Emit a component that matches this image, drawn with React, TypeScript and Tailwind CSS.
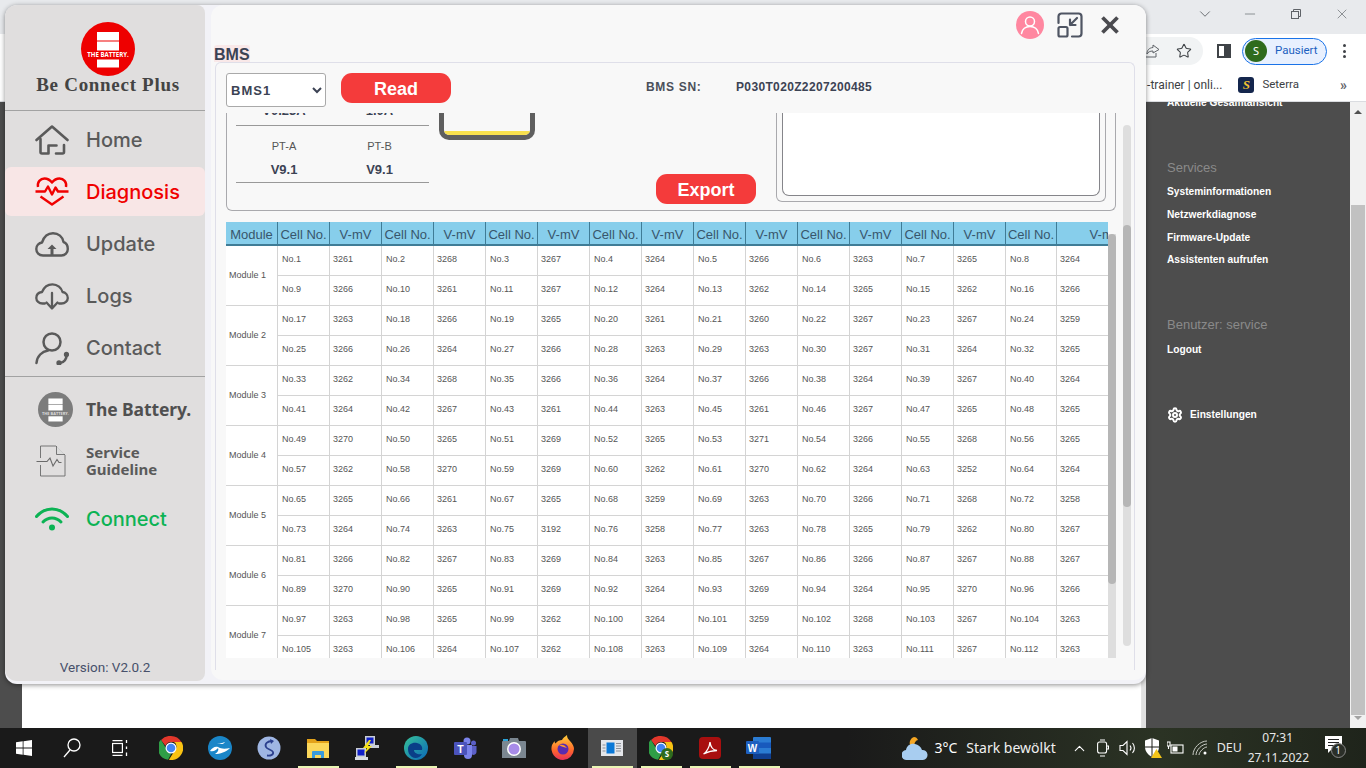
import React from "react";
import { X, Star, Settings, ChevronUp, Minus, ChevronDown } from "lucide-react";

const data: number[][][] = [
  [[3261,3268,3267,3264,3266,3263,3265,3264],[3266,3261,3267,3264,3262,3265,3262,3266]],
  [[3263,3266,3265,3261,3260,3267,3267,3259],[3266,3264,3266,3263,3263,3267,3264,3265]],
  [[3262,3268,3266,3264,3266,3264,3267,3264],[3264,3267,3261,3263,3261,3267,3265,3265]],
  [[3270,3265,3269,3265,3271,3266,3268,3265],[3262,3270,3269,3262,3270,3264,3252,3264]],
  [[3265,3261,3265,3259,3263,3266,3268,3258],[3264,3263,3192,3258,3263,3265,3262,3267]],
  [[3266,3267,3269,3263,3267,3266,3267,3267],[3270,3265,3269,3264,3269,3264,3270,3266]],
  [[3263,3265,3262,3264,3259,3268,3267,3263],[3263,3264,3262,3263,3264,3263,3267,3263]],
];

function BatteryLogo({ size, bg, band }: { size: number; bg: string; band: string }) {
  return (
    <svg width={size} height={size} viewBox="0 0 54 54">
      <circle cx="27" cy="27" r="27" fill={bg} />
      <rect x="16" y="10" width="22" height="8.5" fill="#fff" />
      <rect x="16" y="19.5" width="22" height="9" fill="#fff" />
      <rect x="16" y="37.5" width="22" height="8" fill="#fff" />
      <text x="27" y="35" textAnchor="middle" fontSize="6.1" fontWeight="700" fill={band} fontFamily="'Open Sans',sans-serif">THE BATTERY.</text>
    </svg>
  );
}

const HomeIcon = () => (
  <svg width="34" height="30" viewBox="0 0 34 30" fill="none" stroke="#5a5a5a" strokeWidth="2.6" strokeLinejoin="round" strokeLinecap="round">
    <path d="M1.500 15 17 1.500 32.500 15" />
    <path d="M5.500 14v13a1.500 1.500 0 0 0 1.500 1.500h6.500V20.500h8" />
    <path d="M21 28.500h6.500a1.500 1.500 0 0 0 1.500-1.500V20" />
  </svg>
);
const HeartIcon = () => (
  <svg width="34" height="29" viewBox="0 0 34 29" fill="none" stroke="#f00000" strokeWidth="2.4" strokeLinejoin="round">
    <path d="M3 10C2 5 5.500 1.500 9.500 1.500 12.500 1.500 15 3 17 5.500 19 3 21.500 1.500 24.500 1.500 28.500 1.500 32 5 31 10" />
    <path d="M0.500 14.500H10L13 9.500 17 17.500 20.500 10.500 23 14.500H33.500" />
    <path d="M5.500 19.500 17 27.500 28.500 19.500" />
  </svg>
);
const CloudUp = () => (
  <svg width="34" height="25" viewBox="0 0 34 25" fill="none" stroke="#5a5a5a" strokeWidth="2.4" strokeLinejoin="round">
    <path d="M8 23.500C4 23.500 1.300 20.800 1.300 17 1.300 13.500 4 11 7 10.500 9 4.500 13 1.300 18 1.300 23.500 1.300 27.500 5 28.500 10 31.500 11 32.800 14 32.800 17 32.800 20.800 30 23.500 26.500 23.500Z" />
    <path d="M17 12.500 12.500 17H15.500V23H18.500V17H21.500Z" fill="#5a5a5a" stroke="none" />
  </svg>
);
const CloudDown = () => (
  <svg width="34" height="27" viewBox="0 0 34 27" fill="none" stroke="#5a5a5a" strokeWidth="2.3" strokeLinejoin="round" strokeLinecap="round">
    <path d="M10 20.500H7.500C4 20.500 1.300 18 1.300 15 1.300 12 3.500 9.500 7 9 9 4 13 1.300 17.500 1.300 22.500 1.300 26.500 5 27.500 9 30.500 9.500 32.800 12 32.800 15 32.800 18 30 20.500 26.500 20.500H24" />
    <path d="M17 10V25M11.500 19.500 17 25.500 22.500 19.500" />
  </svg>
);
const ContactIcon = () => (
  <svg width="34" height="33" viewBox="0 0 34 33" fill="none" stroke="#5a5a5a" strokeWidth="2.5" strokeLinecap="round">
    <circle cx="17" cy="10" r="8.500" />
    <path d="M1.500 31C2 24 7 19.500 13 18.500" />
    <path d="M31.500 22C32 27 29 30.500 25 31" />
    <circle cx="24" cy="31" r="1.400" fill="#5a5a5a" />
    <circle cx="31.500" cy="22.500" r="1.400" fill="#5a5a5a" />
  </svg>
);
const DocIcon = () => (
  <svg width="32" height="32" viewBox="0 0 32 32" fill="none" stroke="#6a6a6a" strokeWidth="0.9">
    <path d="M4.500 13V1H20L29 10V31H4.500V20" />
    <path d="M20.500 1V9.500H29" fill="#dcdcdc" />
    <path d="M0.500 16.500H11L14 13 17 21 21 14.500 23 17.500H25.500" strokeWidth="1.100" />
  </svg>
);
const WifiIcon = () => (
  <svg width="34" height="24" viewBox="0 0 34 24" fill="none" stroke="#0cb354" strokeWidth="3" strokeLinecap="round">
    <path d="M1.500 9.500C10 -0.500 24 -0.500 32.500 9.500" />
    <path d="M8 15C13 9.500 21 9.500 26 15" />
    <circle cx="17" cy="20.500" r="3" fill="#0cb354" stroke="none" />
  </svg>
);

function NavRow({ icon, label, cls = "text-[#5a5a5a]", rowCls = "" }: { icon: React.ReactNode; label: string; cls?: string; rowCls?: string }) {
  return (
    <div className={`flex items-center h-[52px] ${rowCls}`}>
      <div className="w-[81px] flex justify-center pl-[13px] shrink-0">{icon}</div>
      <span className={`font-['Inter',sans-serif] font-medium text-[20px] ${cls}`}>{label}</span>
    </div>
  );
}

function Sidebar() {
  return (
    <aside className="w-[200px] h-[676px] shrink-0 bg-[#e0dede] rounded-l-[12px] rounded-r-[8px] flex flex-col">
      <div className="h-[106px] flex flex-col items-center border-b border-[#a2a2a2] pt-[17px]">
        <div className="pl-[6px] flex flex-col items-center">
          <BatteryLogo size={54} bg="#ee0000" band="#ffffff" />
          <div className="font-['Liberation_Serif',serif] font-bold text-[19px] tracking-[0.7px] text-[#444444] leading-[20px] -mt-[1px] whitespace-nowrap">Be Connect Plus</div>
        </div>
      </div>
      <div className="pt-[3px] h-[266px] border-b border-[#a2a2a2] flex flex-col">
        <NavRow icon={<HomeIcon />} label="Home" />
        <div className="mt-[1px] h-[49px] bg-[#f8e6e6] rounded-[6px] flex items-center">
          <div className="w-[81px] flex justify-center pl-[13px] shrink-0"><HeartIcon /></div>
          <span className="font-['Inter',sans-serif] font-medium text-[20px] text-[#f00000]">Diagnosis</span>
        </div>
        <div className="h-[2px]" />
        <NavRow icon={<CloudUp />} label="Update" />
        <NavRow icon={<CloudDown />} label="Logs" />
        <NavRow icon={<ContactIcon />} label="Contact" />
      </div>
      <div className="flex items-center h-[36px] mt-[14px]">
        <div className="w-[81px] flex justify-center pl-[19px] shrink-0"><BatteryLogo size={35} bg="#7c7c7c" band="#dddddd" /></div>
        <span className="font-['Noto_Sans',sans-serif] font-bold text-[17.500px] text-[#505050] tracking-[-0.1px]">The Battery.</span>
      </div>
      <div className="flex items-center h-[36px] mt-[16px]">
        <div className="w-[81px] flex justify-center pl-[13px] shrink-0"><DocIcon /></div>
        <span className="font-['Noto_Sans',sans-serif] font-bold text-[15px] leading-[17px] text-[#5a5a5a]">Service<br />Guideline</span>
      </div>
      <NavRow icon={<WifiIcon />} label="Connect" cls="text-[#0cb354]" rowCls="mt-[14px]" />
      <div className="mt-auto pb-[5px] text-center font-['Roboto',sans-serif] text-[13.500px] leading-[18px] text-[#47506a]">Version: V2.0.2</div>
    </aside>
  );
}

function Table() {
  const head: string[] = [];
  for (let i = 0; i < 8; i++) head.push("Cell No.", "V-mV");
  return (
    <div className="w-[882px] h-[436px] overflow-hidden mt-[11px] bg-white">
      <table className="table-fixed border-separate border-spacing-0 w-[929px] font-['Liberation_Sans',sans-serif]">
        <colgroup>
          <col className="w-[52px]" />
          {head.map((_, i) => <col key={i} className={i === 15 ? "w-[98px]" : i === 14 ? "w-[51px]" : "w-[52px]"} />)}
        </colgroup>
        <thead>
          <tr>
            {["Module", ...head].map((h, i) => (
              <th key={i} className="h-[24px] bg-[#87ceeb] border-r-[1.500px] border-b-2 border-[#3f7c96] text-[13px] leading-[16px] font-normal text-[#38566b] text-center whitespace-nowrap overflow-hidden p-0 pt-[3px]">{h}</th>
            ))}
          </tr>
        </thead>
        <tbody>
          {data.map((mod, m) =>
            mod.map((row, r) => {
              const base = m * 16 + r * 8;
              return (
                <tr key={`${m}-${r}`}>
                  {r === 0 && (
                    <td rowSpan={2} className="border-r border-b border-[#d4d4d4] text-[9px] text-[#555555] pl-[3px] align-middle">Module {m + 1}</td>
                  )}
                  {row.map((v, c) => (
                    <React.Fragment key={c}>
                      <td className="h-[30px] border-r border-b border-[#d4d4d4] text-[9px] text-[#555555] pl-[4px] pb-[1px] align-middle">No.{base + c + 1}</td>
                      <td className="h-[30px] border-r border-b border-[#d4d4d4] text-[9px] text-[#555555] pl-[3px] pb-[1px] align-middle">{v}</td>
                    </React.Fragment>
                  ))}
                </tr>
              );
            })
          )}
        </tbody>
      </table>
    </div>
  );
}

function MainPanel() {
  return (
    <main className="ml-[6px] w-[935px] h-[675px] bg-[#f8f8f8] rounded-[12px] flex flex-col">
      <div className="h-[40px] flex items-center justify-end pr-[21px]">
        <div className="w-[28px] h-[28px] rounded-full bg-[#ff87a0] flex items-center justify-center">
          <svg width="20" height="20" viewBox="0 0 20 20" fill="none" stroke="#fff" strokeWidth="1.500" strokeLinecap="round">
            <circle cx="10" cy="6.500" r="4.500" />
            <path d="M1.500 18.500C2.500 13.500 6 11.500 10 11.500 14 11.500 17.500 13.500 18.500 18.500" />
          </svg>
        </div>
        <svg className="ml-[13px]" width="26" height="26" viewBox="0 0 26 26" fill="none" stroke="#4f5563" strokeWidth="2.200" strokeLinecap="round" strokeLinejoin="round">
          <path d="M1.500 11V4.500a3 3 0 0 1 3-3H21.500a3 3 0 0 1 3 3V21.500a3 3 0 0 1-3 3H15" />
          <rect x="1.500" y="15" width="9" height="9.500" rx="1.500" />
          <path d="M20 6 13 13M13 7.500V13H18.500" />
        </svg>
        <X className="ml-[12px] text-[#4a4a4f]" size={30} strokeWidth={3} strokeLinecap="butt" />
      </div>
      <div className="h-[17px] pl-[3px]">
        <span className="block w-[36px] h-[17px] bg-[#f9e8e8] rounded-t-[3px] text-[16px] leading-[20px] font-bold text-[#3c4354]">BMS</span>
      </div>
      <section className="relative ml-[4px] w-[920px] h-[608px] border-x border-t border-[#dfdfe9] rounded-t-[6px]">
        <div className="h-[50px] pl-[10px] pt-[10px] flex items-start">
          <select defaultValue="BMS1" className="w-[100px] h-[34px] bg-white border border-[#a9a9a9] rounded-[3px] text-[13px] font-bold tracking-[1px] text-[#3c4354] pl-0 outline-none">
            <option>BMS1</option>
            <option>BMS2</option>
          </select>
          <button className="ml-[15px] w-[110px] h-[30px] bg-[#f43b3b] rounded-[11px] text-white font-bold text-[18px] leading-[32px]">Read</button>
          <div className="ml-[195px] mt-[5px] text-[12px] font-bold text-[#4a4f5a] tracking-[0.7px] w-[90px] whitespace-nowrap">BMS SN:</div>
          <div className="text-[12px] mt-[5px] font-bold text-[#3c4354] tracking-[0.35px]">P030T020Z2207200485</div>
        </div>
        <div className="h-[545px] overflow-hidden px-[10px]">
          <div className="w-[890px] h-[98px] border-x border-b border-[#a9a9ad] rounded-b-[6px] flex">
            <div className="ml-[9px] w-[193px] shrink-0">
              <div className="h-[13px] overflow-hidden border-b border-[#999999] flex text-[13px] font-bold text-[#3c4354]">
                <span className="w-[96px] text-center -mt-[11px] leading-[18px]">V0.23A</span>
                <span className="w-[95px] text-center -mt-[11px] leading-[18px]">1.0A</span>
              </div>
              <div className="h-[57px] border-b border-[#999999] flex">
                <div className="w-[96px] text-center">
                  <div className="text-[11px] text-[#555555] pt-[14px] leading-[13px]">PT-A</div>
                  <div className="text-[13px] font-bold text-[#3c4354] mt-[9px] leading-[16px]">V9.1</div>
                </div>
                <div className="w-[95px] text-center">
                  <div className="text-[11px] text-[#555555] pt-[14px] leading-[13px]">PT-B</div>
                  <div className="text-[13px] font-bold text-[#3c4354] mt-[9px] leading-[16px]">V9.1</div>
                </div>
              </div>
            </div>
            <div className="ml-[10px] w-[96px] h-[27px] shrink-0 border-x-[5px] border-b-[5px] border-[#5f5f5f] rounded-b-[10px] flex flex-col justify-end overflow-hidden">
              <div className="h-[4px] bg-[#f8e04e]" />
            </div>
            <button className="ml-[121px] mt-[61px] w-[100px] h-[30px] shrink-0 bg-[#f43b3b] rounded-[11px] text-white font-bold text-[18px] leading-[32px]">Export</button>
            <div className="ml-[20px] w-[330px] h-[89px] shrink-0 border-x border-b border-[#a9a9ad] rounded-b-[6px]">
              <div className="mx-[5px] h-[83px] bg-white border-x border-b border-[#85858a] rounded-b-[7px]" />
            </div>
          </div>
          <Table />
        </div>
        <div className="absolute left-[892px] top-[171px] w-[8px] h-[424px] bg-[#dedede]">
          <div className="w-[8px] h-[350px] bg-[#b6b6b6] rounded-full" />
        </div>
        <div className="absolute left-[907px] top-[62px] w-[8px] h-[521px] bg-[#dedede] rounded-full">
          <div className="mt-[100px] w-[8px] h-[282px] bg-[#b6b6b6] rounded-full" />
        </div>
      </section>
    </main>
  );
}

const ChromeIcon = ({ badge }: { badge?: boolean }) => (
  <svg width="24" height="24" viewBox="0 0 24 24">
    <path d="M12 0a12 12 0 0 1 10.400 6H12a6 6 0 0 0-5.600 3.800L2 3.900A12 12 0 0 1 12 0Z" fill="#e2372b" />
    <path d="M1.900 3.700 7.200 12.500a5.500 5.500 0 0 0 5.200 5l-3.300 6.200A12 12 0 0 1 1.900 3.700Z" fill="#2f9e46" />
    <path d="M22.500 6a12 12 0 0 1-12.600 17.800L15.500 15a5.500 5.500 0 0 0-.5-8.900Z" fill="#f9c213" />
    <circle cx="12" cy="12" r="5.500" fill="#fff" />
    <circle cx="12" cy="12" r="4.300" fill="#4285f4" />
    {badge && <circle cx="18" cy="18" r="6" fill="#2f6b1d" />}
    {badge && <text x="18" y="21" fontSize="8" textAnchor="middle" fill="#fff" fontWeight="700" fontFamily="'Noto Sans',sans-serif">S</text>}
  </svg>
);

const taskIcons: React.ReactNode[] = [
  <ChromeIcon key="c" />,
  <svg key="b" width="24" height="24" viewBox="0 0 24 24"><circle cx="12" cy="12" r="12" fill="#1a86c8" /><path d="M2 15c4 1 6-1 8-3 1 2 0 4-3 6 5 0 11-2 15-6-5 1-9 1-12-1-3-1-6 1-8 4Z" fill="#fff" /><path d="M9 7c3 1 5 0 8-1-1 2-4 3-8 1Z" fill="#fff" /></svg>,
  <svg key="s" width="24" height="24" viewBox="0 0 24 24" fill="none"><circle cx="12" cy="12" r="11.500" fill="#9fb6e3" /><path d="M15.500 5C10 5 7.500 8 9 11c1 2.500 6 2.500 7 5 .8 2.500-2 4-6 3.500" stroke="#2b3f8e" strokeWidth="1.800" /><path d="M13 3l4 2-3 3Z" fill="#2b3f8e" /></svg>,
  <svg key="f" width="22" height="22" viewBox="0 0 22 22"><path d="M0 2h8l2 2h12v3H0Z" fill="#e3a21a" /><path d="M0 6h22v15H0Z" fill="#fbd75b" /><path d="M5 21v-6a1 1 0 0 1 1-1h10a1 1 0 0 1 1 1v6h-3v-3H8v3Z" fill="#3a9bdc" /></svg>,
  <svg key="n" width="24" height="26" viewBox="0 0 24 26"><rect x="10" y="1" width="10" height="9" fill="#c9ced6" /><rect x="11.500" y="2.500" width="7" height="6" fill="#1020c8" /><rect x="15" y="10" width="9" height="3" fill="#c9ced6" /><rect x="1" y="13" width="10" height="9" fill="#c9ced6" /><rect x="2.500" y="14.500" width="7" height="6" fill="#1020c8" /><rect x="0" y="22" width="13" height="3" fill="#d8dce2" /><path d="M14 5 8 13h4l-3 6 8-8h-4l3-6Z" fill="#f5e11a" /></svg>,
  <svg key="e" width="24" height="24" viewBox="0 0 24 24"><defs><linearGradient id="edg" x1="0" y1="0" x2="1" y2="1"><stop offset="0" stopColor="#37c39a" /><stop offset="1" stopColor="#0b67b8" /></linearGradient></defs><circle cx="12" cy="12" r="12" fill="url(#edg)" /><path d="M4 13c0-5 5-7 9-6 4 1 6 4 5 7h-8c0 3 4 5 8 4-2 4-7 5-10 3-3-2-4-5-4-8Z" fill="#0a3f88" /></svg>,
  <svg key="t" width="24" height="24" viewBox="0 0 24 24"><circle cx="14" cy="5" r="3.500" fill="#7b83eb" /><circle cx="20.500" cy="7" r="2.500" fill="#5b5fc7" /><path d="M11 9h8v10a4 4 0 0 1-8 0Z" fill="#7b83eb" /><path d="M19 10h4.500v6a3 3 0 0 1-4.500 2.500Z" fill="#5b5fc7" /><rect x="1" y="6" width="13" height="13" rx="1" fill="#4b53bc" /><text x="7.500" y="16.500" fontSize="10.500" fontWeight="700" fill="#fff" textAnchor="middle" fontFamily="'Liberation Sans',sans-serif">T</text></svg>,
  <svg key="ca" width="24" height="22" viewBox="0 0 24 22"><path d="M0 5a1 1 0 0 1 1-1h6l1-3h8l1 3h6a1 1 0 0 1 1 1v16H0Z" fill="#7b8791" /><rect x="1" y="2" width="5" height="2" fill="#2aa3d8" /><circle cx="12" cy="12" r="7" fill="#fff" /><circle cx="12" cy="12" r="5.500" fill="#a78be8" /></svg>,
  <svg key="ff" width="24" height="26" viewBox="0 0 24 26"><defs><linearGradient id="fox" x1="0" y1="0" x2="0" y2="1"><stop offset="0" stopColor="#ffcf3a" /><stop offset="0.6" stopColor="#ff6a2b" /><stop offset="1" stopColor="#e8305a" /></linearGradient></defs><path d="M12 25A11.500 11.500 0 0 1 1 10c1-2 2-3 2.500-4 0 1 .5 2 1 2.500C6 6 9 5 11 5c1-2 3-3.500 5-5 0 2.500 1 4 3 6 3 3 4 6 4 8A11.500 11.500 0 0 1 12 25Z" fill="url(#fox)" /><circle cx="12" cy="14" r="5.500" fill="#5a2bb0" /><path d="M8 10c3-1 6 0 8 3-2-1-5-1-8-3Z" fill="#ff9a2b" /></svg>,
  <svg key="nw" width="22" height="16" viewBox="0 0 22 16"><rect width="22" height="16" fill="#e4e6ea" /><rect x="5.500" y="2.500" width="8" height="11" fill="#0a78d7" /><path d="M15 3.500h5M15 6h5M15 8.500h5M15 11h5M1.500 5h3M1.500 8h3M1.500 11h3" stroke="#8a8f98" /></svg>,
  <ChromeIcon key="cb" badge />,
  <svg key="a" width="22" height="22" viewBox="0 0 22 22"><rect width="22" height="22" rx="4" fill="#a80f0f" /><path d="M4.500 17c3-1.500 6-7 6.500-12 .5 5 3 8 7 8.500-4 0-8.500 1-13.500 3.500Z" fill="none" stroke="#fff" strokeWidth="1.300" /></svg>,
  <svg key="w" width="26" height="22" viewBox="0 0 26 22"><rect x="7" y="0" width="18" height="22" rx="1" fill="#2b7cd3" /><rect x="7" y="5.500" width="18" height="5.500" fill="#185abd" /><rect x="7" y="16.500" width="18" height="5.500" fill="#103f91" /><rect x="0" y="4" width="13" height="13" rx="1" fill="#1e5fbf" /><text x="6.500" y="14.500" fontSize="10" fontWeight="700" fill="#fff" textAnchor="middle" fontFamily="'Liberation Sans',sans-serif">W</text></svg>,
];
const underlined = [3, 5, 9, 10, 11, 12];

function Taskbar() {
  return (
    <footer className="h-[40px] shrink-0 flex items-center bg-[linear-gradient(90deg,#1a1a1a_0%,#1a1a1a_62%,#2b3324_85%,#1f241b_100%)] text-white font-['Noto_Sans',sans-serif]">
      <div className="w-[48px] flex justify-center">
        <svg width="16" height="16" viewBox="0 0 16 16" fill="#fff"><path d="M0 2.300 6.700 1.300V7.600H0ZM7.500 1.200 16 0V7.600H7.500ZM0 8.400H6.700V14.700L0 13.700ZM7.500 8.400H16V16L7.500 14.800Z" /></svg>
      </div>
      <div className="w-[48px] flex justify-center">
        <svg width="18" height="20" viewBox="0 0 18 20" fill="none" stroke="#fff" strokeWidth="1.300"><circle cx="11" cy="7" r="6" /><path d="M7 12 1 19" /></svg>
      </div>
      <div className="w-[48px] flex justify-center">
        <svg width="16" height="16" viewBox="0 0 16 16" fill="none" stroke="#fff" strokeWidth="1.200"><rect x="0.600" y="3.500" width="9.800" height="9" /><path d="M0.500 0.600H10.500M0.500 15.400H10.500M14.500 0V3M14.500 6.500V9M14.500 12.500V16" strokeWidth="1.300" /></svg>
      </div>
      <div className="w-[2.500px]" />
      {taskIcons.map((ic, i) => (
        <div key={i} className={`relative w-[49px] h-[40px] flex items-center justify-center ${i === 9 ? "bg-[#4a4a4a]" : ""}`}>
          {ic}
          {underlined.includes(i) && <div className="absolute bottom-0 left-[4px] right-[4px] h-[2px] bg-[#e9f5b4]" />}
        </div>
      ))}
      <div className="ml-[118px] flex items-center">
        <svg width="30" height="26" viewBox="0 0 30 26"><path d="M12 2c-3 1-5 4-4 8l4 2c0-4 2-7 4-7-1-2-2-3-4-3Z" fill="#f5a623" /><path d="M5 25a5 5 0 0 1-1-10c1-5 5-7 9-6 3 .5 6 3 7 6a5 5 0 0 1 1 10Z" fill="#a8cdf0" /></svg>
        <span className="ml-[3px] text-[14px] leading-[16px]">3°C</span>
        <span className="ml-[9px] text-[14px] leading-[16px] text-[#f0f0f0] whitespace-nowrap">Stark bewölkt</span>
      </div>
      <ChevronUp className="ml-[15px]" size={17} strokeWidth={1.500} />
      <svg className="ml-[9px]" width="12" height="18" viewBox="0 0 12 18" fill="none" stroke="#fff" strokeWidth="1.100"><rect x="0.600" y="3" width="9" height="11" rx="2" /><path d="M3 1H8M3 17H8" /><path d="M10 7h1.500v3H10" /></svg>
      <svg className="ml-[10px]" width="18" height="18" viewBox="0 0 18 18" fill="none" stroke="#fff" strokeWidth="1.100"><path d="M1 6.500H4L8 2.500V15.500L4 11.500H1Z" /><path d="M11 6.500a4 4 0 0 1 0 5M13.500 4a7.500 7.500 0 0 1 0 10" /></svg>
      <svg className="ml-[7px]" width="18" height="20" viewBox="0 0 18 20"><path d="M8 0 15 2.500V9C15 14 11 17.500 8 19 5 17.500 1 14 1 9V2.500Z" fill="#fff" /><path d="M8 0V19M1 9H15" stroke="#1c1f19" strokeWidth="1" /><path d="M12.500 11 18 20H7Z" fill="#f5c518" /></svg>
      <svg className="ml-[5px]" width="17" height="14" viewBox="0 0 17 14" fill="none" stroke="#fff" strokeWidth="1.100"><rect x="4" y="4" width="12" height="8" /><rect x="5.500" y="5.500" width="5" height="5" fill="#fff" stroke="none" /><path d="M0 1H3V5H0ZM1.500 5V8" /></svg>
      <svg className="ml-[8px]" width="16" height="16" viewBox="0 0 16 16" fill="none" stroke="#c9ccc5" strokeWidth="1"><path d="M1 15C1 8 8 1 15 1M4 15C4 10 10 4 15 4M7 15c0-3 5-8 8-8" /><circle cx="13" cy="13" r="1.500" fill="#fff" stroke="none" /></svg>
      <span className="ml-[9px] text-[12.500px] text-[#e8e8e8] w-[30px]">DEU</span>
      <div className="ml-[1px] w-[60px] text-center text-[12px] leading-[20px] text-[#e8e8e8]">
        <div>07:31</div>
        <div>27.11.2022</div>
      </div>
      <div className="relative ml-[17px] w-[24px] h-[24px]">
        <svg width="18" height="17" viewBox="0 0 18 17"><path d="M0 0H17V13H7L3 17V13H0Z" fill="#fff" /><path d="M3 3.500H14M3 6.500H14M3 9.500H10" stroke="#222" /></svg>
        <span className="absolute left-[6px] top-[7px] w-[15px] h-[15px] rounded-full bg-[#2b2f28] border border-[#888] text-[10px] leading-[13px] text-center">1</span>
      </div>
    </footer>
  );
}

function BrowserBackdrop() {
  return (
    <div className="h-[728px] flex flex-col font-['Liberation_Sans',sans-serif]">
      <div className="h-[34px] bg-[#e8eaed] flex items-center justify-end text-[#5f6368] pb-[6px]">
        <ChevronDown size={18} strokeWidth={1.200} className="mr-[28px]" />
        <Minus size={16} strokeWidth={1} className="mr-[33px]" />
        <svg className="mr-[33px]" width="10" height="10" viewBox="0 0 10 10" fill="none" stroke="#5f6368" strokeWidth="1"><rect x="0.500" y="2.500" width="7" height="7" /><path d="M2.500 2.500V0.500H9.500V7.500H7.500" /></svg>
        <X size={16} strokeWidth={1} className="mr-[16px]" />
      </div>
      <div className="h-[34px] bg-white flex items-center justify-end">
        <div className="w-[101px] h-[28px] bg-[#f1f3f4] rounded-r-full flex items-center justify-end pr-[11px] text-[#5f6368]">
          <svg className="mr-[16px]" width="15" height="14" viewBox="0 0 15 14" fill="none" stroke="#5f6368" strokeWidth="1"><path d="M1 13H11V9M8 1 14 5.500 8 9V7C5 7 3 8 2 10 2 6 4 4 8 3.500Z" /></svg>
          <Star size={16} strokeWidth={1.600} className="text-[#3f4347]" />
        </div>
        <div className="ml-[14px] w-[14px] h-[14px] border-2 border-[#3f4347] flex justify-end"><div className="w-[5px] h-full bg-[#3f4347]" /></div>
        <div className="ml-[11px] w-[85px] h-[27px] rounded-full border border-[#1a73e8] bg-[#e8f0fe] flex items-center pl-[2px]">
          <span className="w-[22px] h-[22px] rounded-full bg-[#2f6b1d] text-white text-[11px] leading-[22px] text-center font-['Noto_Sans',sans-serif]">S</span>
          <span className="ml-[8px] text-[11.500px] text-[#1a5fc0] font-['Roboto',sans-serif]">Pausiert</span>
        </div>
        <div className="ml-[16px] mr-[20px] flex flex-col gap-[2.500px]">
          <i className="block w-[3px] h-[3px] rounded-full bg-[#3f4347]" />
          <i className="block w-[3px] h-[3px] rounded-full bg-[#3f4347]" />
          <i className="block w-[3px] h-[3px] rounded-full bg-[#3f4347]" />
        </div>
      </div>
      <div className="h-[34px] bg-white border-b border-[#dadce0] flex items-center justify-end font-['Roboto',sans-serif] text-[12px] text-[#3c4043]">
        <span>-trainer | onli...</span>
        <span className="ml-[16px] w-[16px] h-[16px] rounded-[3px] bg-[#14264d] text-[#f0c030] text-[13px] leading-[16px] text-center italic font-['Liberation_Serif',serif] font-bold">S</span>
        <span className="ml-[8px] text-[11.500px]">Seterra</span>
        <span className="ml-[41px] mr-[19px] text-[#5f6368] text-[14px] font-bold leading-[14px]">»</span>
      </div>
      <div className="flex-1 flex min-h-0">
        <div className="w-[22px] bg-[#4d4d4d]" />
        <div className="w-[1120px] bg-white border-r border-[#e4e4e4]" />
        <div className="w-[4px] bg-[#e0e0e0]" />
        <div className="w-[204px] bg-[#4d4d4d] pl-[21px] overflow-hidden text-[10.200px] font-bold text-white">
          <div className="h-[14px] -mt-[6px] leading-[14px]">Aktuelle Gesamtansicht</div>
          <div className="h-[20px] mt-[48px] leading-[20px] text-[13px] font-normal text-[#8a8a8a]">Services</div>
          <div className="h-[14px] mt-[7px] leading-[14px]">Systeminformationen</div>
          <div className="h-[14px] mt-[9px] leading-[14px]">Netzwerkdiagnose</div>
          <div className="h-[14px] mt-[9px] leading-[14px]">Firmware-Update</div>
          <div className="h-[14px] mt-[8px] leading-[14px]">Assistenten aufrufen</div>
          <div className="h-[20px] mt-[48px] leading-[20px] text-[13px] font-normal text-[#8a8a8a]">Benutzer: service</div>
          <div className="h-[14px] mt-[8px] leading-[14px]">Logout</div>
          <div className="h-[16px] mt-[50px] flex items-center">
            <Settings size={16} strokeWidth={3} className="text-white" />
            <span className="ml-[7px]">Einstellungen</span>
          </div>
        </div>
        <div className="w-[16px] bg-[#f1f1f1] flex flex-col items-center">
          <div className="mt-[8px] w-0 h-0 border-x-[4px] border-x-transparent border-b-[4px] border-b-[#505050]" />
          <div className="mt-[91px] w-[14px] h-[510px] bg-[#c1c1c1]" />
          <div className="mt-[1px] w-0 h-0 border-x-[4px] border-x-transparent border-t-[4px] border-t-[#a3a3a3]" />
        </div>
      </div>
    </div>
  );
}

export default function App() {
  return (
    <div className="relative w-[1366px] h-[768px] overflow-hidden flex flex-col font-['Liberation_Sans',sans-serif]">
      <BrowserBackdrop />
      <Taskbar />
      <div className="absolute left-[5px] top-[5px] w-[1141px] h-[679px] bg-[#f2f2f7] rounded-[12px] shadow-[0_1px_5px_rgba(0,0,0,0.45)] flex">
        <Sidebar />
        <MainPanel />
      </div>
    </div>
  );
}
